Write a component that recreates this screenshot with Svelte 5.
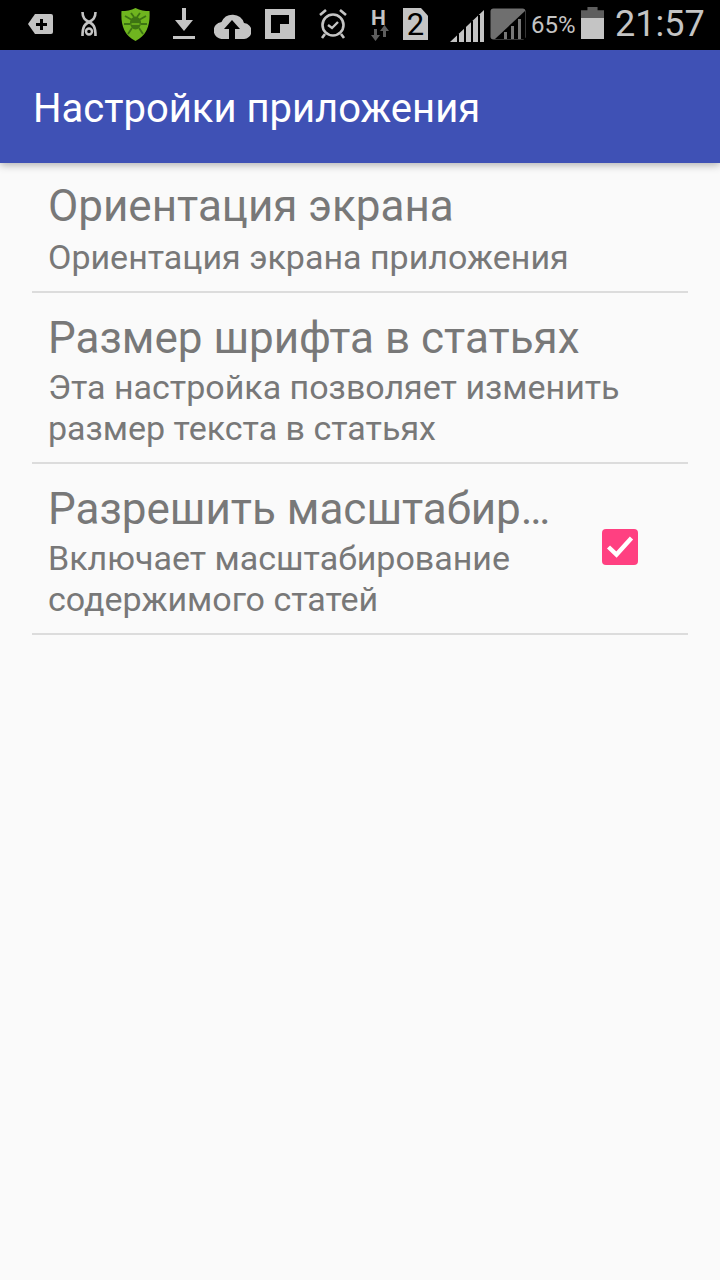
<script>
  const prefs = [
    { title: "Ориентация экрана", summary: ["Ориентация экрана приложения"] },
    { title: "Размер шрифта в статьях", summary: ["Эта настройка позволяет изменить", "размер текста в статьях"] },
    { title: "Разрешить масштабир…", summary: ["Включает масштабирование", "содержимого статей"], checked: true },
  ];
</script>

<div class="screen">
  <div class="status">
    <svg class="ic" style="left:27px;top:13px" width="26" height="22" viewBox="0 0 26 22"><path d="M8 1h16a2 2 0 0 1 2 2v16a2 2 0 0 1-2 2H8L1 11z" fill="#c4c4c4"/><path d="M13 6h3v4h4v3h-4v4h-3v-4H9v-3h4z" fill="#000"/></svg>
    <svg class="ic" style="left:81px;top:12px" width="16" height="24" viewBox="0 0 16 24" fill="none" stroke="#c4c4c4" stroke-width="2.600"><path d="M1.500 0c0 6 2.500 8 6.500 10 4-2 6.500-4 6.500-10"/><path d="M8 10c-4 2-6.500 4-6.500 14M8 10c4 2 6.500 4 6.500 14"/><circle cx="8" cy="19.500" r="3" stroke-width="2.400"/></svg>
    <svg class="ic" style="left:121px;top:8px" width="29" height="33" viewBox="0 0 29 33"><path d="M14.500 0C19 2.500 24 3 28.500 3c.8 13-2 24-14 30C2.500 27-.3 16 .5 3 5 3 10 2.500 14.500 0z" fill="#6fb51f"/><ellipse cx="14.500" cy="15" rx="5.500" ry="6.500" fill="#3d7413"/><path d="M4 8l7 4M25 8l-7 4M3 16h6M26 16h-6M7 26l4-6M22 26l-4-6M10 5l3 4M19 5l-3 4" stroke="#3d7413" stroke-width="1.800"/><path d="M10.500 16h8" stroke="#6fb51f" stroke-width="1.600"/></svg>
    <svg class="ic" style="left:173px;top:8px" width="22" height="32" viewBox="0 0 22 32"><path d="M9 0h4v12h7L11 23 2 12h7z" fill="#c4c4c4"/><path d="M0 28h22v3H0z" fill="#c4c4c4"/></svg>
    <svg class="ic" style="left:214px;top:13px" width="37" height="26" viewBox="0 0 37 26"><path d="M9 26a8.500 8.500 0 0 1-1.500-17A12 12 0 0 1 30 10a8 8 0 0 1-1 16z" fill="#c4c4c4"/><path d="M18 7l8 9h-5v10h-6V16h-5z" fill="#000"/></svg>
    <svg class="ic" style="left:265px;top:9px" width="30" height="30" viewBox="0 0 30 30"><path d="M0 0h30v30H0z" fill="#c4c4c4"/><path d="M6 6h18v9h-9v9H6z" fill="#000"/></svg>
    <svg class="ic" style="left:319px;top:9px" width="28" height="30" viewBox="0 0 28 30" fill="none" stroke="#c4c4c4"><circle cx="14" cy="16" r="10.500" stroke-width="2.600"/><path d="M9 16l4 3 6-6" stroke-width="2.400"/><path d="M1 6l6-5M27 6l-6-5M6 25l-3 4M22 25l3 4" stroke-width="2.600"/></svg>
    <svg class="ic" style="left:371px;top:25px" width="18" height="16" viewBox="0 0 18 16"><path d="M3 4h3v6h3l-4.500 6L0 10h3zM15 12h-3V6H9l4.500-6L18 6h-3z" fill="#5e5e5e"/></svg>
    <span class="net">H</span>
    <div class="sim"><span>2</span></div>
    <svg class="ic" style="left:450px;top:10px" width="34" height="32" viewBox="0 0 34 32"><path d="M0 32L34 0v32z" fill="#c4c4c4"/><path d="M8 24v8M15 17v15M22 11v21M29 5v27" stroke="#000" stroke-width="2"/></svg>
    <svg class="ic" style="left:490px;top:8px" width="36" height="32" viewBox="0 0 36 32"><rect x="0.500" y="0.500" width="35" height="31" rx="3" fill="#6f6f6f"/><path d="M5 31L35 3v28z" fill="#000"/><path d="M14 24h3v7h-3zM21 18h3v13h-3zM28 11h3v20h-3z" fill="#777"/></svg>
    <span class="pct">65%</span>
    <div class="battery"><i></i><b></b></div>
    <span class="clock">21:57</span>
  </div>

  <header class="toolbar">Настройки приложения</header>

  <ul class="prefs">
    {#each prefs as pref}
      <li class="pref">
        <div class="text">
          <div class="title">{pref.title}</div>
          {#each pref.summary as line}
            <div class="summary">{line}</div>
          {/each}
        </div>
        {#if pref.checked}
          <svg class="check" width="36" height="36" viewBox="0 0 36 36"><rect width="36" height="36" rx="4" fill="#ff4081"/><path d="M6.500 18l8 7.500L29.500 9" fill="none" stroke="#fff" stroke-width="4.400"/></svg>
        {/if}
      </li>
    {/each}
  </ul>
</div>

<style>
  :global(body) {
    margin: 0;
  }

  .screen {
    width: 720px;
    height: 1280px;
    background: #fafafa;
    font-family: Roboto, sans-serif;
    display: flex;
    flex-direction: column;
    overflow: hidden;
  }

  .status {
    position: relative;
    height: 50px;
    flex: none;
    background: #000;
    color: #c4c4c4;
  }

  .ic {
    position: absolute;
  }

  .net {
    position: absolute;
    left: 371px;
    top: 6px;
    font-size: 21px;
    font-weight: 700;
    line-height: 24px;
  }

  .sim {
    position: absolute;
    left: 403px;
    top: 8px;
    width: 25px;
    height: 32px;
    background: #c4c4c4;
    clip-path: polygon(0 0, 72% 0, 100% 24%, 100% 100%, 0 100%);
    color: #000;
    font: 400 31px/34px Roboto, sans-serif;
    text-align: center;
  }

  .pct {
    position: absolute;
    left: 531px;
    top: 9px;
    font-size: 24px;
    line-height: 32px;
  }

  .battery {
    position: absolute;
    left: 581px;
    top: 7px;
    width: 23px;
    height: 32px;
    display: flex;
    flex-direction: column;
  }

  .battery i {
    height: 11px;
    background: #5e5e5e;
    clip-path: polygon(0 30%, 28% 30%, 28% 0, 72% 0, 72% 30%, 100% 30%, 100% 100%, 0 100%);
  }

  .battery b {
    flex: 1;
    background: #c4c4c4;
  }

  .clock {
    position: absolute;
    left: 615px;
    top: 4px;
    font-size: 36px;
    line-height: 40px;
  }

  .toolbar {
    height: 113px;
    flex: none;
    box-sizing: border-box;
    padding: 3px 33px 0;
    display: flex;
    align-items: center;
    background: #3f51b5;
    color: #fff;
    font-size: 40px;
    box-shadow: 0 2px 8px rgba(0, 0, 0, 0.3);
    position: relative;
  }

  .prefs {
    list-style: none;
    margin: 0;
    padding: 0 32px;
  }

  .pref {
    display: flex;
    align-items: center;
    padding: 19px 50px 13px 16px;
    border-bottom: 2px solid #dcdcdc;
  }

  .pref:first-child {
    padding-top: 17px;
  }

  .pref:first-child .title {
    margin-bottom: 5px;
  }

  .text {
    flex: 1;
    min-width: 0;
  }

  .title {
    color: #787878;
    font-size: 44px;
    line-height: 52px;
    margin-bottom: 3px;
    white-space: nowrap;
  }

  .summary {
    color: #787878;
    font-size: 34px;
    line-height: 41px;
    white-space: nowrap;
  }

  .check {
    flex: none;
    margin-bottom: 10px;
  }
</style>
